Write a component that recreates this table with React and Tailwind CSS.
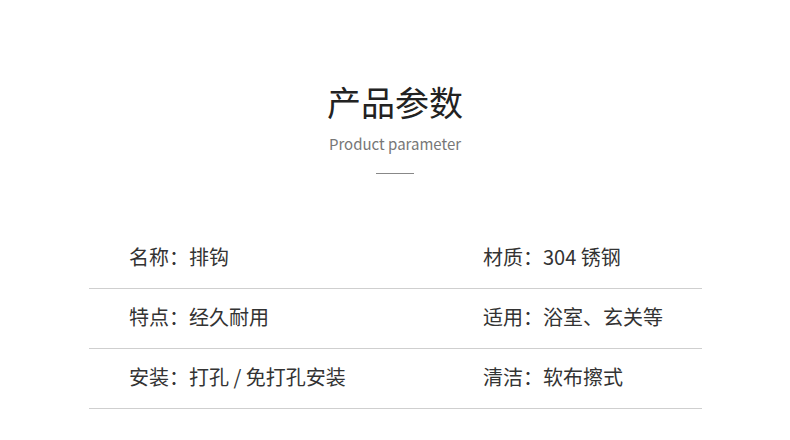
import React from 'react';

const rows = [
  ['名称：排钩', '材质：304 锈钢'],
  ['特点：经久耐用', '适用：浴室、玄关等'],
  ['安装：打孔 / 免打孔安装', '清洁：软布擦式'],
];

const App = () => {
  return (
    <div
      className="w-[790px] h-[440px] bg-white overflow-hidden"
      style={{ fontFamily: '"Noto Sans CJK SC", "Noto Sans", sans-serif' }}
    >
      {/* Heading */}
      <div className="flex flex-col items-center pt-[80px]">
        <h1 className="text-[34px] leading-[44px] text-[#222]">产品参数</h1>
        <p className="mt-[10px] text-[15px] leading-[20px] text-[#777]">Product parameter</p>
        <div className="mt-[19px] w-[38px] h-px bg-[#888]" />
      </div>

      {/* Parameter table */}
      <div className="mx-[89px] mt-[55px] w-[613px]">
        {rows.map(([left, right], i) => (
          <div key={i} className="flex items-center h-[60px] border-b border-[#cfcfcf] pl-[40px] pb-[3px]">
            <span className="w-[354px] text-[20px] text-[#333]">{left}</span>
            <span className="text-[20px] text-[#333]">{right}</span>
          </div>
        ))}
      </div>
    </div>
  );
};

export default App;
